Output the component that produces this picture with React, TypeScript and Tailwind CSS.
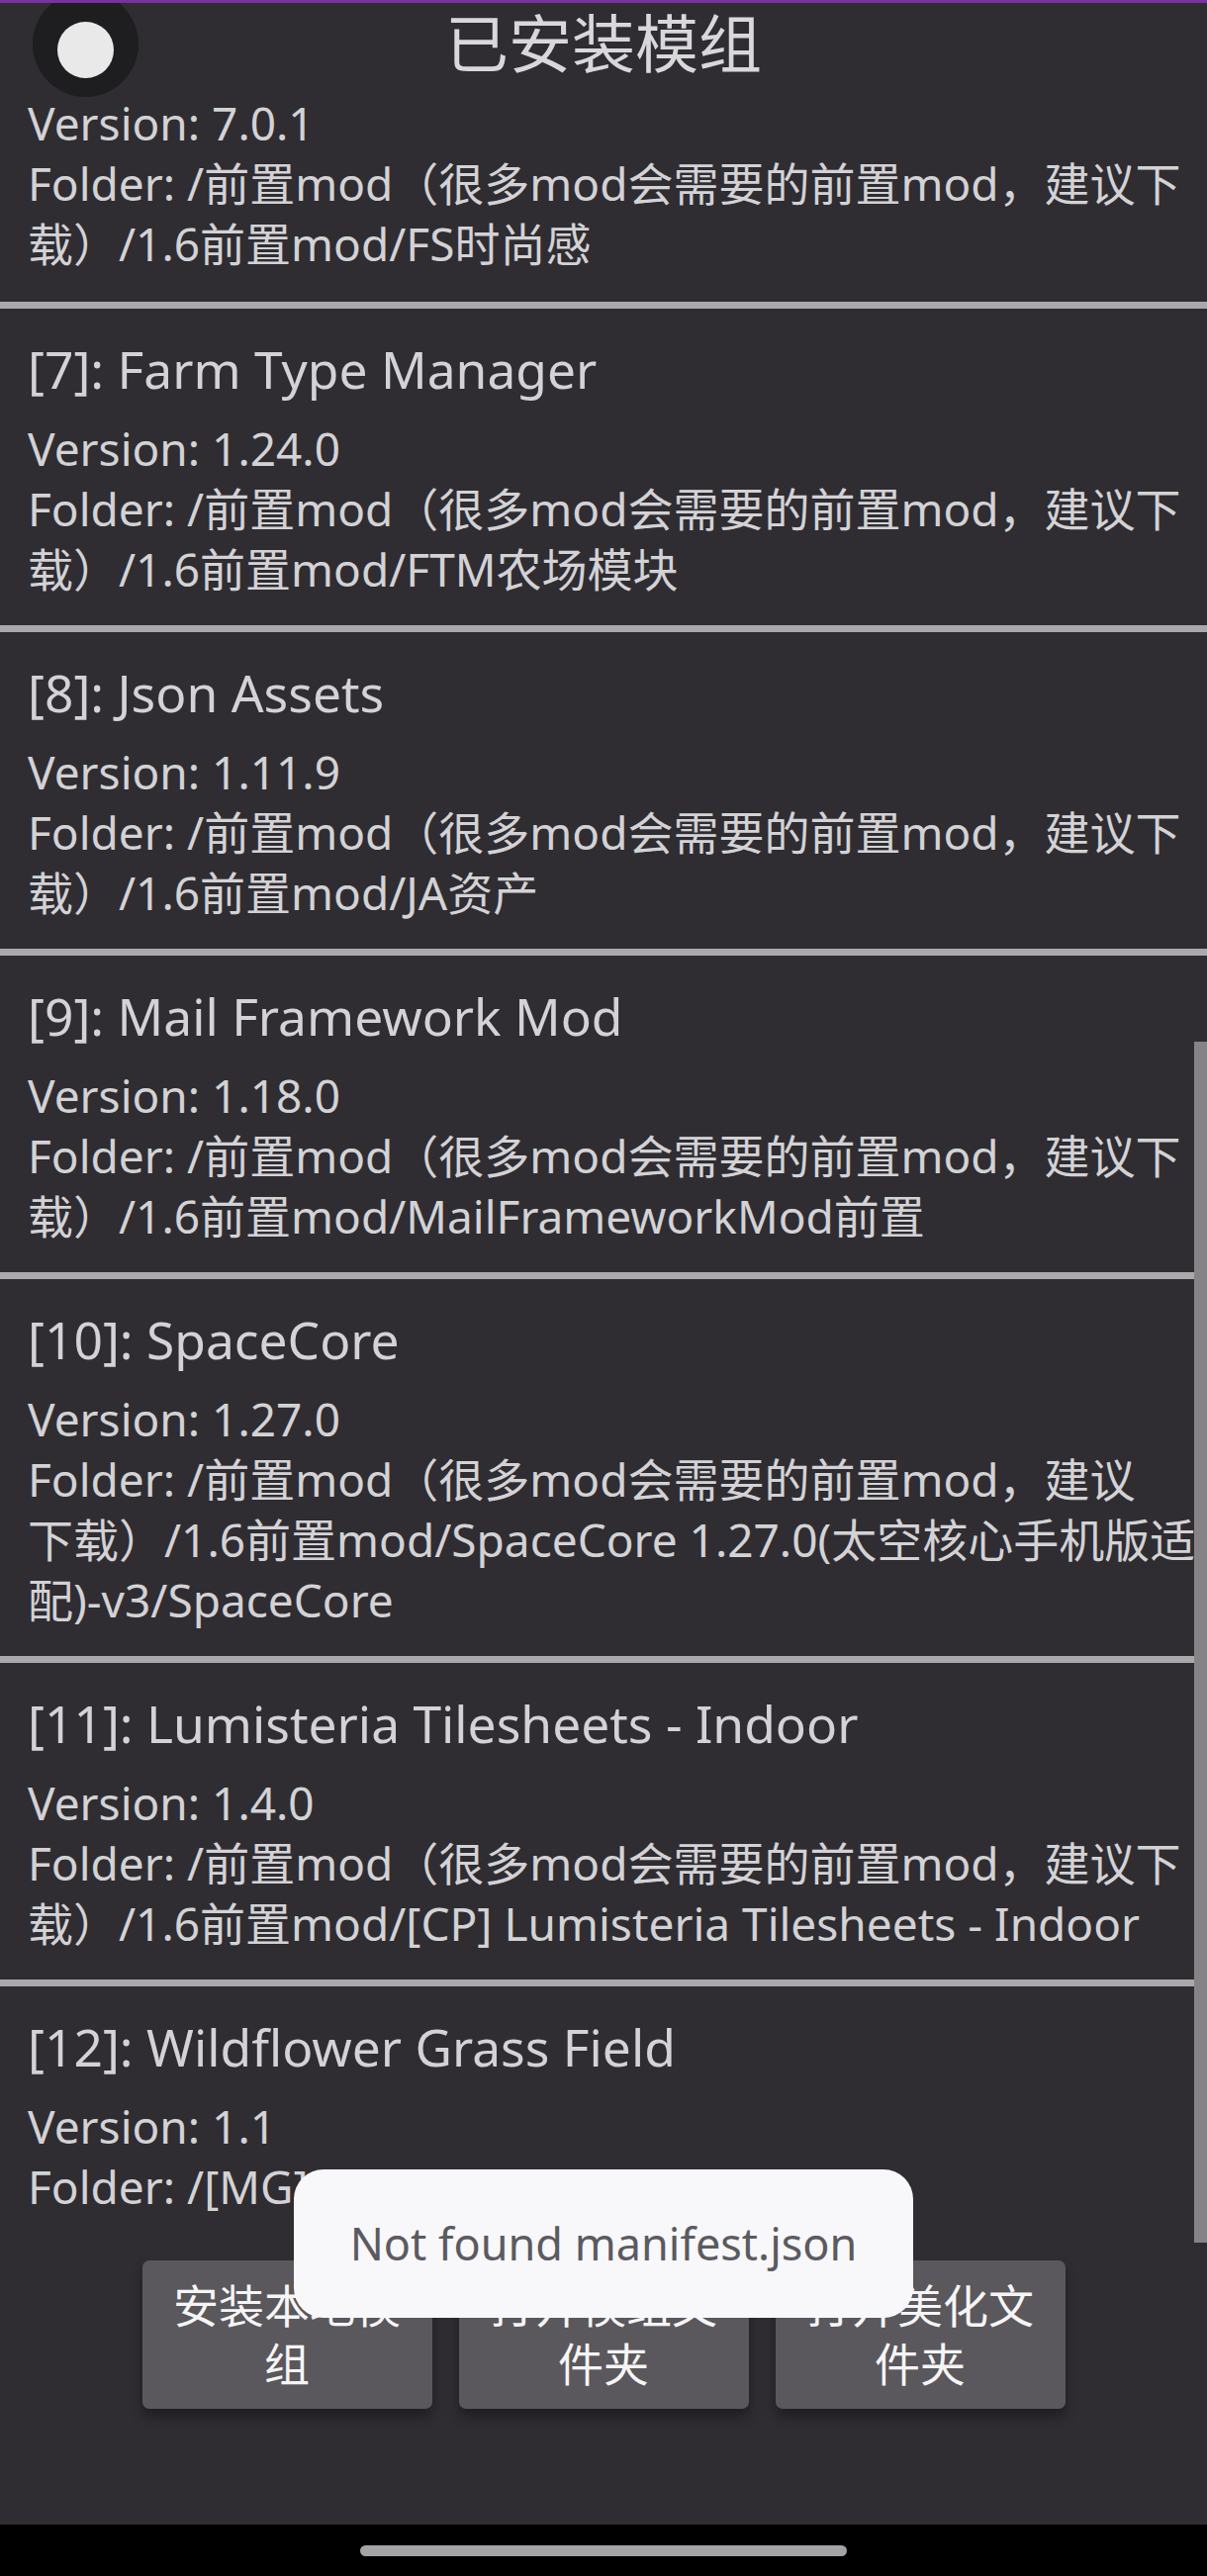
import React from "react";

type Mod = {
  id?: number;
  name?: string;
  version: string;
  folder: string[];
};

const PRE = "Folder: /前置mod（很多mod会需要的前置mod，建议下";

const mods: Mod[] = [
  { version: "7.0.1", folder: [PRE, "载）/1.6前置mod/FS时尚感"] },
  { id: 7, name: "Farm Type Manager", version: "1.24.0", folder: [PRE, "载）/1.6前置mod/FTM农场模块"] },
  { id: 8, name: "Json Assets", version: "1.11.9", folder: [PRE, "载）/1.6前置mod/JA资产"] },
  { id: 9, name: "Mail Framework Mod", version: "1.18.0", folder: [PRE, "载）/1.6前置mod/MailFrameworkMod前置"] },
  {
    id: 10,
    name: "SpaceCore",
    version: "1.27.0",
    folder: [
      "Folder: /前置mod（很多mod会需要的前置mod，建议",
      "下载）/1.6前置mod/SpaceCore 1.27.0(太空核心手机版适",
      "配)-v3/SpaceCore",
    ],
  },
  { id: 11, name: "Lumisteria Tilesheets - Indoor", version: "1.4.0", folder: [PRE, "载）/1.6前置mod/[CP] Lumisteria Tilesheets - Indoor"] },
  { id: 12, name: "Wildflower Grass Field", version: "1.1", folder: ["Folder: /[MG] Wildflower Grass Field"] },
];

function ModItem({ mod, last }: { mod: Mod; last: boolean }) {
  const partial = mod.id === undefined;
  return (
    <div className="flex flex-col">
      <div className={`flex flex-col px-[28px] ${partial ? "pb-[28px]" : "pt-[29px] pb-[26px]"}`}>
        {!partial && (
          <div className="h-[65px] leading-[65px] text-[51.5px] whitespace-nowrap mb-[17px]">
            [{mod.id}]: {mod.name}
          </div>
        )}
        <div className="h-[61px] leading-[61px] text-[46px] whitespace-nowrap">Version: {mod.version}</div>
        {mod.folder.map((line, i) => (
          <div key={i} className="h-[61px] leading-[61px] text-[46px] whitespace-nowrap">
            {line}
          </div>
        ))}
      </div>
      {!last && <div className="h-[7px] bg-[#a9a8ab] shrink-0"></div>}
    </div>
  );
}

export default function App() {
  const buttons = [
    ["安装本地模", "组"],
    ["打开模组文", "件夹"],
    ["打开美化文", "件夹"],
  ];

  return (
    <div className="relative w-full h-[2604px] flex flex-col overflow-hidden bg-[#2f2d32] text-[#d3d2d5] font-['Noto_Sans','Noto_Sans_CJK_SC',sans-serif]">
      {/* header */}
      <header className="relative h-[94px] shrink-0 flex items-start justify-center">
        <div className="absolute left-[33px] top-[-9px] w-[107px] h-[107px] rounded-full bg-[#1e1d20] flex items-center justify-center">
          <div className="w-[57px] h-[57px] rounded-full bg-[#e9e9ea] mt-[11px]"></div>
        </div>
        <h1 className="mt-[6px] text-[64px] leading-[76px] text-[#d8d7da] whitespace-nowrap">已安装模组</h1>
        <div className="absolute left-0 right-0 top-0 h-[3px] bg-[#7a2fa3]"></div>
      </header>

      {/* list */}
      <div className="relative h-[2173px] shrink-0 overflow-hidden">
        {mods.map((m, i) => (
          <ModItem key={i} mod={m} last={i === mods.length - 1} />
        ))}
        <div className="absolute right-0 top-[959px] w-[13px] h-[1214px] bg-[#858386]"></div>
      </div>

      {/* buttons */}
      <div className="flex-1 flex justify-center gap-[27px] pt-[18px]">
        {buttons.map((b, i) => (
          <button
            key={i}
            className="w-[293px] h-[150px] rounded-[7px] bg-[#5a585c] shadow-[0_8px_12px_rgba(0,0,0,0.35)] flex flex-col items-center pt-[16px] text-[46px] leading-[59px] text-[#f5f5f6]"
          >
            <span>{b[0]}</span>
            <span>{b[1]}</span>
          </button>
        ))}
      </div>

      {/* nav bar */}
      <div className="h-[52px] shrink-0 bg-black flex justify-center pt-[21px]">
        <div className="w-[492px] h-[11px] rounded-full bg-[#a3a2a5]"></div>
      </div>

      {/* toast */}
      <div className="absolute left-[297px] top-[2193px] w-[626px] h-[150px] rounded-[30px] bg-[#f8f7fa] flex items-center justify-center text-[45px] text-[#5b5a5f] whitespace-nowrap">
        Not found manifest.json
      </div>
    </div>
  );
}
